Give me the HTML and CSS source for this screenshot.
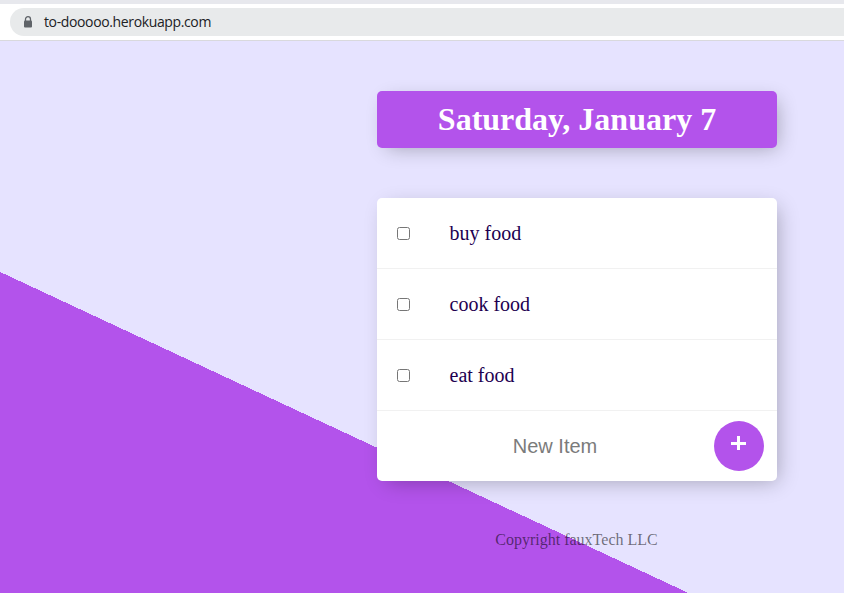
FILE: index.html
```html
<!DOCTYPE html>
<html lang="en">
<head>
<meta charset="utf-8">
<title>To-do list</title>
<link rel="stylesheet" href="styles.css">
</head>
<body>
<header class="toolbar">
  <div class="address">
    <svg class="lock" width="10" height="13" viewBox="0 0 10 13"><path d="M2.5 5V3.2a2.5 2.5 0 0 1 5 0V5" fill="none" stroke="#5f6368" stroke-width="1.3"/><rect x="1" y="4.5" width="8" height="7" rx="1" fill="#5f6368"/></svg>
    <span class="url">to-dooooo.herokuapp.com</span>
  </div>
</header>
<main class="page">
  <div class="box heading"><h1>Saturday, January 7</h1></div>
  <div class="box list">
    <label class="item"><input type="checkbox"><span>buy food</span></label>
    <label class="item"><input type="checkbox"><span>cook food</span></label>
    <label class="item"><input type="checkbox"><span>eat food</span></label>
    <form class="new-item">
      <input class="field" type="text" placeholder="New Item">
      <button class="add" type="button" aria-label="Add"><svg width="16" height="16" viewBox="0 0 16 16"><path d="M0 8.5h15M7.5 1v14" stroke="#fff" stroke-width="3" fill="none"/></svg></button>
    </form>
  </div>
  <footer>Copyright fauxTech LLC</footer>
</main>
</body>
</html>
```
FILE: styles.css
```css
* { box-sizing: border-box; }
body {
  margin: 0;
  height: 593px;
  overflow: hidden;
  font-family: "Liberation Serif", serif;
}
.toolbar {
  height: 41px;
  padding: 4px 0 4px 10px;
  border-top: 4px solid #e7e8ed;
  border-bottom: 1px solid #d9d9dd;
  background: #fff;
}
.address {
  display: flex;
  align-items: center;
  height: 28px;
  padding-left: 13px;
  border-radius: 14px 0 0 14px;
  background: #e8eaeb;
}
.lock { margin-right: 11px; }
.url {
  font: 14px/20px "Open Sans", sans-serif;
  letter-spacing: -0.37px;
  color: #202124;
}
.page {
  height: 552px;
  padding: 50px 0 0 377px;
  background: linear-gradient(25deg, #b353eb 291px, #e6e3ff 291px);
}
.box {
  width: 400px;
  margin-bottom: 50px;
  border-radius: 5px;
  background: #fff;
  box-shadow: 5px 5px 20px -5px rgba(0, 0, 0, 0.3);
}
.heading {
  padding: 10px;
  background: #b353eb;
  text-align: center;
}
h1 {
  margin: 0;
  font-size: 32px;
  line-height: 37px;
  color: #fff;
}
.item {
  display: flex;
  align-items: center;
  height: 71px;
  padding-left: 20px;
  border-bottom: 1px solid #f1f1f1;
  font-size: 20px;
  color: #1d0050;
}
.item input {
  width: 13px;
  height: 13px;
  margin: 0 39.5px 0 0;
}
.new-item {
  display: flex;
  align-items: center;
  height: 70px;
  padding-right: 13px;
}
.field {
  width: 337px;
  height: 60px;
  padding: 0 0 0 19px;
  border: 0;
  background: transparent;
  font: 20px "Liberation Sans", sans-serif;
  text-align: center;
}
.field::placeholder { color: #7b7b7b; }
.add {
  display: flex;
  justify-content: center;
  width: 50px;
  height: 50px;
  padding: 14px 0 0;
  border: 0;
  border-radius: 50%;
  background: #b353eb;
}
footer {
  width: 399px;
  font-size: 16px;
  line-height: 18px;
  text-align: center;
  color: rgba(0, 0, 0, 0.54);
}
```
